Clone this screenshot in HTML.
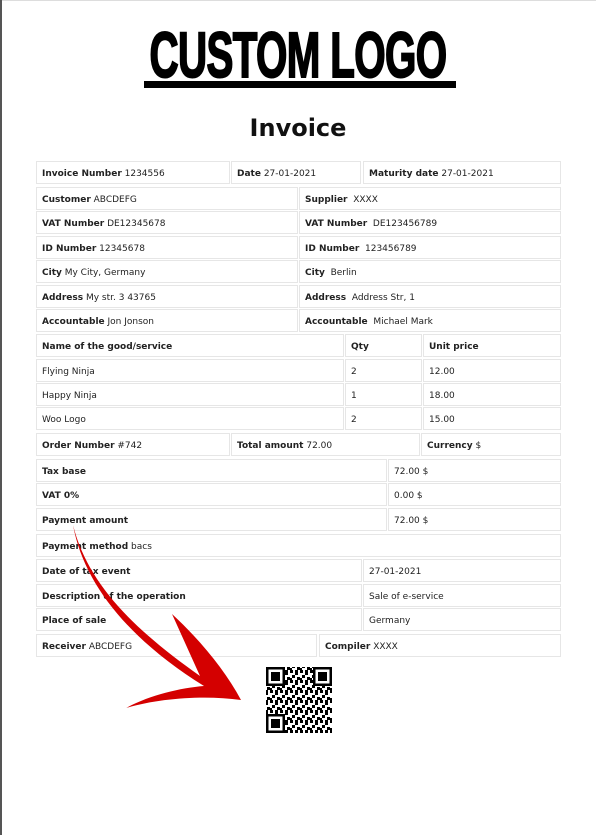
<!DOCTYPE html>
<html><head><meta charset="utf-8"><style>
html,body{margin:0;padding:0;width:596px;height:835px;background:#fff;overflow:hidden;position:relative;font-family:"DejaVu Sans","Liberation Sans",sans-serif;color:#222}
.lb{position:absolute;left:0;top:0;width:2px;height:835px;background:#555}
.tb{position:absolute;left:0;top:0;width:596px;height:1px;background:#ddd}
.c{position:absolute;box-sizing:border-box;border:1px solid #e6e6e6;height:23px;font-size:9px;line-height:21px;padding-left:5px;padding-top:2px;white-space:nowrap}
b{font-weight:bold;color:#222}
.logo{position:absolute;left:0;top:22px;width:596px;text-align:center;font-family:"Liberation Sans",sans-serif;font-weight:bold;font-size:64px;line-height:66px;letter-spacing:-1px;transform:scaleX(0.63);transform-origin:298px 0;white-space:nowrap;color:#000;-webkit-text-stroke:2px #000}
.ul{position:absolute;left:144px;top:81px;width:312px;height:7px;background:#000}
.title{position:absolute;left:0;width:596px;top:114px;text-align:center;font-size:24px;font-weight:bold;color:#111}
</style></head><body>
<div class="tb"></div><div class="lb"></div>
<div class="logo">CUSTOM LOGO</div>
<div class="ul"></div>
<div class="title">Invoice</div>

<div class="c" style="top:161px;left:36px;width:194px"><b>Invoice Number</b> 1234556</div>
<div class="c" style="top:161px;left:231px;width:130px"><b>Date</b> 27-01-2021</div>
<div class="c" style="top:161px;left:363px;width:198px"><b>Maturity date</b> 27-01-2021</div>

<div class="c" style="top:187px;left:36px;width:262px"><b>Customer</b> ABCDEFG</div>
<div class="c" style="top:187px;left:299px;width:262px"><b>Supplier</b>&nbsp; XXXX</div>
<div class="c" style="top:211px;left:36px;width:262px"><b>VAT Number</b> DE12345678</div>
<div class="c" style="top:211px;left:299px;width:262px"><b>VAT Number</b>&nbsp; DE123456789</div>
<div class="c" style="top:236px;left:36px;width:262px"><b>ID Number</b> 12345678</div>
<div class="c" style="top:236px;left:299px;width:262px"><b>ID Number</b>&nbsp; 123456789</div>
<div class="c" style="top:260px;left:36px;width:262px"><b>City</b> My City, Germany</div>
<div class="c" style="top:260px;left:299px;width:262px"><b>City</b>&nbsp; Berlin</div>
<div class="c" style="top:285px;left:36px;width:262px"><b>Address</b> My str. 3 43765</div>
<div class="c" style="top:285px;left:299px;width:262px"><b>Address</b>&nbsp; Address Str, 1</div>
<div class="c" style="top:309px;left:36px;width:262px"><b>Accountable</b> Jon Jonson</div>
<div class="c" style="top:309px;left:299px;width:262px"><b>Accountable</b>&nbsp; Michael Mark</div>

<div class="c" style="top:334px;left:36px;width:308px"><b>Name of the good/service</b></div>
<div class="c" style="top:334px;left:345px;width:77px"><b>Qty</b></div>
<div class="c" style="top:334px;left:423px;width:138px"><b>Unit price</b></div>
<div class="c" style="top:359px;left:36px;width:308px">Flying Ninja</div>
<div class="c" style="top:359px;left:345px;width:77px">2</div>
<div class="c" style="top:359px;left:423px;width:138px">12.00</div>
<div class="c" style="top:383px;left:36px;width:308px">Happy Ninja</div>
<div class="c" style="top:383px;left:345px;width:77px">1</div>
<div class="c" style="top:383px;left:423px;width:138px">18.00</div>
<div class="c" style="top:407px;left:36px;width:308px">Woo Logo</div>
<div class="c" style="top:407px;left:345px;width:77px">2</div>
<div class="c" style="top:407px;left:423px;width:138px">15.00</div>

<div class="c" style="top:433px;left:36px;width:194px"><b>Order Number</b> #742</div>
<div class="c" style="top:433px;left:231px;width:189px"><b>Total amount</b> 72.00</div>
<div class="c" style="top:433px;left:421px;width:140px"><b>Currency</b> $</div>

<div class="c" style="top:459px;left:36px;width:351px"><b>Tax base</b></div>
<div class="c" style="top:459px;left:388px;width:173px">72.00 $</div>
<div class="c" style="top:483px;left:36px;width:351px"><b>VAT 0%</b></div>
<div class="c" style="top:483px;left:388px;width:173px">0.00 $</div>
<div class="c" style="top:508px;left:36px;width:351px"><b>Payment amount</b></div>
<div class="c" style="top:508px;left:388px;width:173px">72.00 $</div>

<div class="c" style="top:534px;left:36px;width:525px"><b>Payment method</b> bacs</div>

<div class="c" style="top:559px;left:36px;width:326px"><b>Date of tax event</b></div>
<div class="c" style="top:559px;left:363px;width:198px">27-01-2021</div>
<div class="c" style="top:584px;left:36px;width:326px"><b>Description of the operation</b></div>
<div class="c" style="top:584px;left:363px;width:198px">Sale of e-service</div>
<div class="c" style="top:608px;left:36px;width:326px"><b>Place of sale</b></div>
<div class="c" style="top:608px;left:363px;width:198px">Germany</div>

<div class="c" style="top:634px;left:36px;width:281px"><b>Receiver</b> ABCDEFG</div>
<div class="c" style="top:634px;left:319px;width:242px"><b>Compiler</b> XXXX</div>

<svg style="position:absolute;left:0;top:0" width="596" height="835">
<defs>
<pattern id="qp" width="10" height="10" patternUnits="userSpaceOnUse">
<rect width="10" height="10" fill="#fff"/>
<rect x="0" y="0" width="3" height="3" fill="#000"/><rect x="5" y="0" width="3" height="5" fill="#000"/>
<rect x="2" y="5" width="3" height="3" fill="#000"/><rect x="7" y="7" width="3" height="3" fill="#000"/>
<rect x="0" y="8" width="2" height="2" fill="#000"/>
</pattern>
</defs>
<rect x="266" y="667" width="66" height="66" fill="url(#qp)"/>
<g fill="#000">
<rect x="266" y="667" width="19" height="19"/><rect x="313" y="667" width="19" height="19"/><rect x="266" y="714" width="19" height="19"/>
</g>
<g fill="#fff">
<rect x="268.5" y="669.5" width="14" height="14"/><rect x="315.5" y="669.5" width="14" height="14"/><rect x="268.5" y="716.5" width="14" height="14"/>
</g>
<g fill="#000">
<rect x="271" y="672" width="9" height="9"/><rect x="318" y="672" width="9" height="9"/><rect x="271" y="719" width="9" height="9"/>
</g>
<path d="M73,525 C88,585 135,630 200,676 L172,614 C200,640 225,670 241,700 C205,695 160,698 126,708 C150,695 180,688 204,686 C130,640 84,585 73,525 Z" fill="#d40000"/>
</svg>
</body></html>
